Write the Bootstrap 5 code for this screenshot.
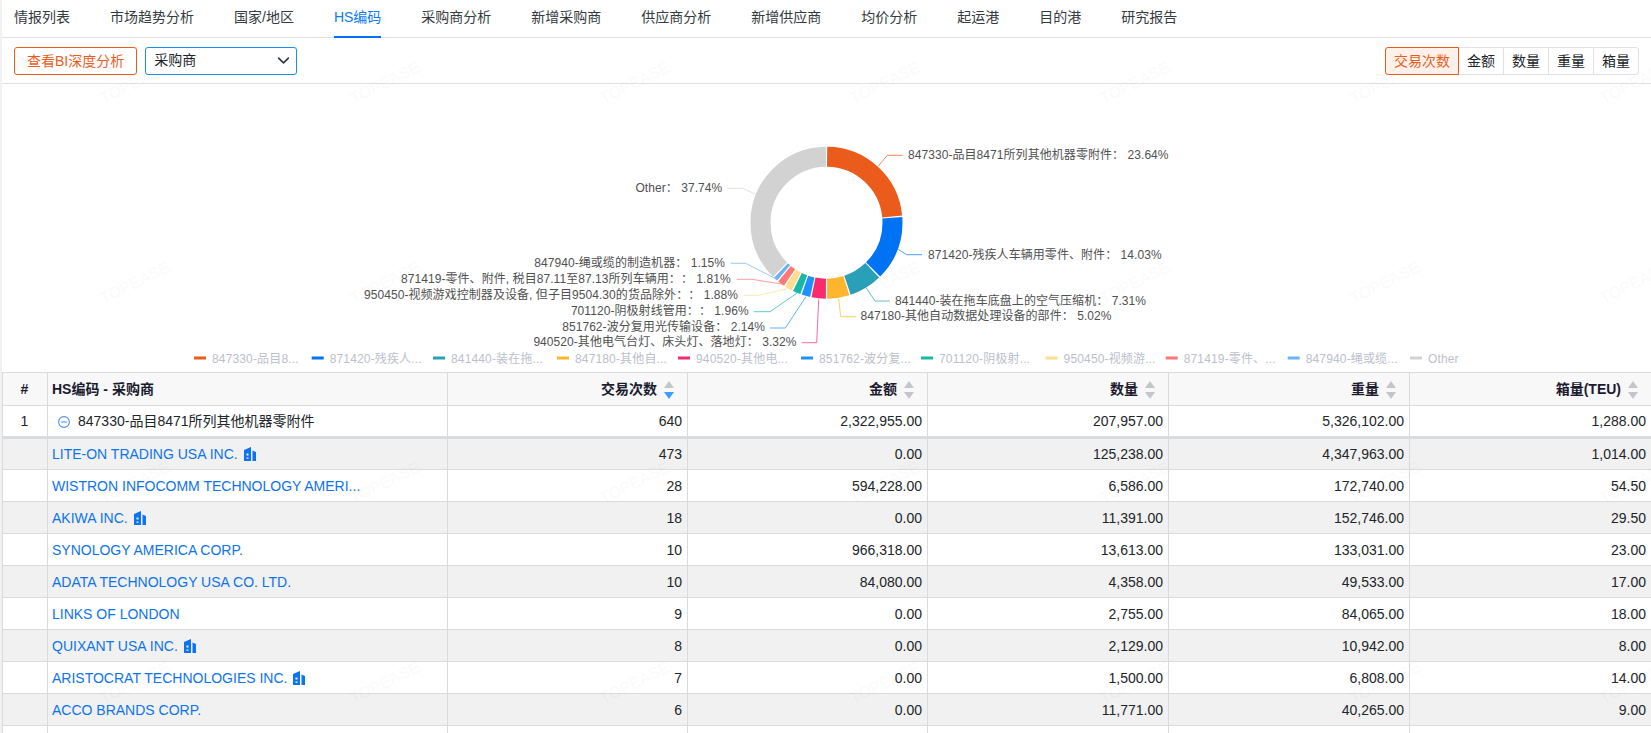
<!DOCTYPE html>
<html lang="zh-CN">
<head>
<meta charset="utf-8">
<title>HS编码</title>
<link href="https://cdn.jsdelivr.net/npm/bootstrap@5.3.0/dist/css/bootstrap.min.css" rel="stylesheet">
<style>
html,body{height:733px;overflow:hidden;background:#fff}
body{font-family:"Liberation Sans","Noto Sans CJK SC",sans-serif;font-size:14px;color:#212529;position:relative}
.shell{border-left:2px solid #f1f1f1;height:733px;overflow:hidden}
.tabbar{height:38px;border-bottom:1px solid #dee2e6}
.tabbar .nav-link{font-size:14px;line-height:20px;padding:7px 20px 0;height:38px;color:#343a40;margin-left:-8px;margin-right:8px;position:relative}
.tabbar .nav-link.on{color:#0d7bf5}
.tabbar .nav-link.on:after{content:"";position:absolute;left:20px;right:20px;bottom:0;height:2px;background:#0073f5}
.toolrow{height:46px;border-bottom:1px solid #dee2e6;padding:0 12px}
.bi-btn{font-size:14px;line-height:20px;padding:3px 12px;color:#eb5b1c;border:1px solid #eb5b1c;border-radius:3px;background:#fff}
.bi-btn:hover{color:#eb5b1c;border-color:#eb5b1c}
.buyer-select{width:152px;height:28px;font-size:14px;line-height:20px;padding:2px 28px 4px 8px;border:1px solid #1890e8;border-radius:3px;color:#212529;background-position:right 4px center;background-size:17px 13px}
.metric .btn{font-size:14px;line-height:20px;padding:3px 8px;border-color:#dee2e6;color:#212529;background:#fff;border-radius:3px}
.metric .btn.on{color:#eb5b1c;border-color:#eb5b1c;background:#fff1ea;z-index:2}
.chartbox{display:block;width:1649px;height:288px}
.chartbox text{font-family:"Liberation Sans","Noto Sans CJK SC",sans-serif;font-size:12px;fill:#505050;text-spacing-trim:space-all;letter-spacing:.06px}
.chartbox .lgd{fill:#bcc0cb;letter-spacing:.15px}
.chartbox .cn{font-family:"Noto Sans CJK TC",sans-serif}
.datatable{table-layout:fixed;width:1649px;margin:0;border-color:#d8dcdf;font-size:14px}
.datatable th,.datatable td{height:32px;padding:0 5px 0 4px;vertical-align:middle;line-height:20px;white-space:nowrap;border-color:#d8dcdf;color:#212529;box-shadow:none;background:transparent}
.datatable thead th{height:33px;background:#f8f8f8;font-weight:700;color:#1b1b2f}
.datatable tr.alt td{background:#f1f1f1}
.datatable tr.head-row td{border-bottom:3px solid #d8dcdf}
.datatable a{color:#0d73f0;text-decoration:none}
.sorter{display:inline-block;vertical-align:middle;margin:0 8px 0 7px}
.bld{vertical-align:-2px;margin-left:6px}
.fold{vertical-align:-2px;margin:0 8px 0 6px}
.wm{position:absolute;left:0;top:0;width:1651px;height:733px;pointer-events:none}
.wm text{font-family:"Liberation Sans",sans-serif;font-size:16px;fill:rgba(0,0,0,.018)}
</style>
</head>
<body>
<div class="shell">
  <ul class="nav tabbar flex-nowrap">
    <li class="nav-item"><a class="nav-link" href="#">情报列表</a></li>
    <li class="nav-item"><a class="nav-link" href="#">市场趋势分析</a></li>
    <li class="nav-item"><a class="nav-link" href="#">国家/地区</a></li>
    <li class="nav-item"><a class="nav-link on" href="#">HS编码</a></li>
    <li class="nav-item"><a class="nav-link" href="#">采购商分析</a></li>
    <li class="nav-item"><a class="nav-link" href="#">新增采购商</a></li>
    <li class="nav-item"><a class="nav-link" href="#">供应商分析</a></li>
    <li class="nav-item"><a class="nav-link" href="#">新增供应商</a></li>
    <li class="nav-item"><a class="nav-link" href="#">均价分析</a></li>
    <li class="nav-item"><a class="nav-link" href="#">起运港</a></li>
    <li class="nav-item"><a class="nav-link" href="#">目的港</a></li>
    <li class="nav-item"><a class="nav-link" href="#">研究报告</a></li>
  </ul>
  <div class="toolrow d-flex align-items-center justify-content-between">
    <div class="d-flex align-items-center gap-2">
      <button class="btn bi-btn" type="button">查看BI深度分析</button>
      <select class="form-select buyer-select"><option>采购商</option></select>
    </div>
    <div class="btn-group metric">
      <button class="btn on" type="button">交易次数</button>
      <button class="btn" type="button">金额</button>
      <button class="btn" type="button">数量</button>
      <button class="btn" type="button">重量</button>
      <button class="btn" type="button">箱量</button>
    </div>
  </div>

  <svg class="chartbox" viewBox="2 84 1649 288" xmlns="http://www.w3.org/2000/svg">
    <g fill="none" stroke-width="20" transform="rotate(-90 826.5 222.7)">
      <circle cx="826.5" cy="222.7" r="66" pathLength="100" stroke="#eb5b1c" stroke-dasharray="23.34 76.66" stroke-dashoffset="-0.15"/>
      <circle cx="826.5" cy="222.7" r="66" pathLength="100" stroke="#0073f5" stroke-dasharray="13.73 86.27" stroke-dashoffset="-23.79"/>
      <circle cx="826.5" cy="222.7" r="66" pathLength="100" stroke="#2a9fb8" stroke-dasharray="7.01 92.99" stroke-dashoffset="-37.82"/>
      <circle cx="826.5" cy="222.7" r="66" pathLength="100" stroke="#ffb52e" stroke-dasharray="4.72 95.28" stroke-dashoffset="-45.13"/>
      <circle cx="826.5" cy="222.7" r="66" pathLength="100" stroke="#f92b6e" stroke-dasharray="3.02 96.98" stroke-dashoffset="-50.15"/>
      <circle cx="826.5" cy="222.7" r="66" pathLength="100" stroke="#1e90ff" stroke-dasharray="1.84 98.16" stroke-dashoffset="-53.47"/>
      <circle cx="826.5" cy="222.7" r="66" pathLength="100" stroke="#17b8a6" stroke-dasharray="1.66 98.34" stroke-dashoffset="-55.61"/>
      <circle cx="826.5" cy="222.7" r="66" pathLength="100" stroke="#ffdd8f" stroke-dasharray="1.58 98.42" stroke-dashoffset="-57.57"/>
      <circle cx="826.5" cy="222.7" r="66" pathLength="100" stroke="#ff7777" stroke-dasharray="1.51 98.49" stroke-dashoffset="-59.45"/>
      <circle cx="826.5" cy="222.7" r="66" pathLength="100" stroke="#6db3f8" stroke-dasharray="0.85 99.15" stroke-dashoffset="-61.26"/>
      <circle cx="826.5" cy="222.7" r="66" pathLength="100" stroke="#d2d2d2" stroke-dasharray="37.44 62.56" stroke-dashoffset="-62.41"/>
    </g>
    <g fill="none" stroke-width="1">
      <polyline stroke="#f08a5c" points="878.3,166 887.3,155.3 902.7,155.3"/>
      <polyline stroke="#4d9df8" points="898.3,249.3 906.7,254.7 922,254.7"/>
      <polyline stroke="#6ebccd" points="866,287.7 875,301 890,301"/>
      <polyline stroke="#ffcb6d" points="838.7,299 840.7,316.7 856,316.7"/>
      <polyline stroke="#fb6b9a" points="818.7,299.3 816.7,342.7 802,342.7"/>
      <polyline stroke="#62b1ff" points="806,296.7 785.3,328 770,328"/>
      <polyline stroke="#5dcdc1" points="796.7,293.3 770,311.7 754,311.7"/>
      <polyline stroke="#ffe7b1" points="788.3,288.7 758.7,295.3 743.3,295.3"/>
      <polyline stroke="#ff9f9f" points="781.7,284 751.7,279.3 736.7,279.3"/>
      <polyline stroke="#99caf9" points="775,278.3 745.7,263.3 730.7,263.3"/>
      <polyline stroke="#e0e0e0" points="755.3,194 742.3,188.3 727.3,188.3"/>
    </g>
    <text x="908" y="158.5">847330-品目8471所列其他机器零附件<tspan class="cn">：</tspan> 23.64%</text>
    <text x="928" y="258.5">871420-残疾人车辆用零件、附件<tspan class="cn">：</tspan> 14.03%</text>
    <text x="895" y="304.5">841440-装在拖车底盘上的空气压缩机<tspan class="cn">：</tspan> 7.31%</text>
    <text x="860.5" y="320">847180-其他自动数据处理设备的部件<tspan class="cn">：</tspan> 5.02%</text>
    <text x="796.5" y="346" text-anchor="end">940520-其他电气台灯、床头灯、落地灯<tspan class="cn">：</tspan> 3.32%</text>
    <text x="765" y="331" text-anchor="end">851762-波分复用光传输设备<tspan class="cn">：</tspan> 2.14%</text>
    <text x="748.7" y="315" text-anchor="end">701120-阴极射线管用<tspan class="cn">：：</tspan> 1.96%</text>
    <text x="738" y="298.5" text-anchor="end">950450-视频游戏控制器及设备, 但子目9504.30的货品除外<tspan class="cn">：：</tspan> 1.88%</text>
    <text x="730.7" y="283" text-anchor="end">871419-零件、附件, 税目87.11至87.13所列车辆用<tspan class="cn">：：</tspan> 1.81%</text>
    <text x="725" y="267" text-anchor="end">847940-绳或缆的制造机器<tspan class="cn">：</tspan> 1.15%</text>
    <text x="722.3" y="192" text-anchor="end">Other<tspan class="cn">：</tspan> 37.74%</text>
    <g stroke-width="3">
      <line x1="194" x2="206" y1="358" y2="358" stroke="#eb5b1c"/>
      <line x1="311.7" x2="323.7" y1="358" y2="358" stroke="#0073f5"/>
      <line x1="433" x2="445" y1="358" y2="358" stroke="#2a9fb8"/>
      <line x1="557" x2="569" y1="358" y2="358" stroke="#ffb52e"/>
      <line x1="678" x2="690" y1="358" y2="358" stroke="#f92b6e"/>
      <line x1="801" x2="813" y1="358" y2="358" stroke="#1e90ff"/>
      <line x1="921" x2="933" y1="358" y2="358" stroke="#17b8a6"/>
      <line x1="1045.6" x2="1057.6" y1="358" y2="358" stroke="#ffdd8f"/>
      <line x1="1165.7" x2="1177.7" y1="358" y2="358" stroke="#ff7777"/>
      <line x1="1287.7" x2="1299.7" y1="358" y2="358" stroke="#6db3f8"/>
      <line x1="1410" x2="1422" y1="358" y2="358" stroke="#d2d2d2"/>
    </g>
    <text class="lgd" x="212" y="362.5">847330-品目8...</text>
    <text class="lgd" x="329.7" y="362.5">871420-残疾人...</text>
    <text class="lgd" x="451" y="362.5">841440-装在拖...</text>
    <text class="lgd" x="575" y="362.5">847180-其他自...</text>
    <text class="lgd" x="696" y="362.5">940520-其他电...</text>
    <text class="lgd" x="819" y="362.5">851762-波分复...</text>
    <text class="lgd" x="939" y="362.5">701120-阴极射...</text>
    <text class="lgd" x="1063.6" y="362.5">950450-视频游...</text>
    <text class="lgd" x="1183.7" y="362.5">871419-零件、...</text>
    <text class="lgd" x="1305.7" y="362.5">847940-绳或缆...</text>
    <text class="lgd" x="1428" y="362.5">Other</text>
  </svg>

  <table class="table table-bordered datatable">
    <colgroup>
      <col style="width:45px"><col style="width:400px"><col style="width:240px"><col style="width:240px"><col style="width:241px"><col style="width:241px"><col style="width:242px">
    </colgroup>
    <thead>
      <tr>
        <th class="text-center">#</th>
        <th>HS编码 - 采购商</th>
        <th class="text-end">交易次数<svg class="sorter" width="10" height="18" viewBox="0 0 10 18"><path d="M5 0l5 7H0z" fill="#c3c7cc"/><path d="M5 18l5-7H0z" fill="#3f9dfb"/></svg></th>
        <th class="text-end">金额<svg class="sorter" width="10" height="18" viewBox="0 0 10 18"><path d="M5 0l5 7H0z" fill="#c3c7cc"/><path d="M5 18l5-7H0z" fill="#c3c7cc"/></svg></th>
        <th class="text-end">数量<svg class="sorter" width="10" height="18" viewBox="0 0 10 18"><path d="M5 0l5 7H0z" fill="#c3c7cc"/><path d="M5 18l5-7H0z" fill="#c3c7cc"/></svg></th>
        <th class="text-end">重量<svg class="sorter" width="10" height="18" viewBox="0 0 10 18"><path d="M5 0l5 7H0z" fill="#c3c7cc"/><path d="M5 18l5-7H0z" fill="#c3c7cc"/></svg></th>
        <th class="text-end">箱量(TEU)<svg class="sorter" width="10" height="18" viewBox="0 0 10 18"><path d="M5 0l5 7H0z" fill="#c3c7cc"/><path d="M5 18l5-7H0z" fill="#c3c7cc"/></svg></th>
      </tr>
    </thead>
    <tbody>
      <tr class="head-row"><td class="text-center">1</td><td><svg class="fold" width="12" height="12" viewBox="0 0 12 12"><circle cx="6" cy="6" r="5.4" fill="none" stroke="#4c93f0" stroke-width="1.1"/><path d="M3.2 6h5.6" stroke="#4c93f0" stroke-width="1.1"/></svg>847330-品目8471所列其他机器零附件</td><td class="text-end">640</td><td class="text-end">2,322,955.00</td><td class="text-end">207,957.00</td><td class="text-end">5,326,102.00</td><td class="text-end">1,288.00</td></tr>
      <tr class="alt"><td></td><td><a href="#">LITE-ON TRADING USA INC.</a><svg class="bld" width="12" height="14" viewBox="0 0 12 14"><path fill="#0d73f0" fill-rule="evenodd" d="M0 3 7 0v14H0zM8.5 3.5 12 5v9H8.5zM2.5 6.5v2h2v-2zm0 4v1.2h2v-1.2z"/></svg></td><td class="text-end">473</td><td class="text-end">0.00</td><td class="text-end">125,238.00</td><td class="text-end">4,347,963.00</td><td class="text-end">1,014.00</td></tr>
      <tr><td></td><td><a href="#">WISTRON INFOCOMM TECHNOLOGY AMERI...</a></td><td class="text-end">28</td><td class="text-end">594,228.00</td><td class="text-end">6,586.00</td><td class="text-end">172,740.00</td><td class="text-end">54.50</td></tr>
      <tr class="alt"><td></td><td><a href="#">AKIWA INC.</a><svg class="bld" width="12" height="14" viewBox="0 0 12 14"><path fill="#0d73f0" fill-rule="evenodd" d="M0 3 7 0v14H0zM8.5 3.5 12 5v9H8.5zM2.5 6.5v2h2v-2zm0 4v1.2h2v-1.2z"/></svg></td><td class="text-end">18</td><td class="text-end">0.00</td><td class="text-end">11,391.00</td><td class="text-end">152,746.00</td><td class="text-end">29.50</td></tr>
      <tr><td></td><td><a href="#">SYNOLOGY AMERICA CORP.</a></td><td class="text-end">10</td><td class="text-end">966,318.00</td><td class="text-end">13,613.00</td><td class="text-end">133,031.00</td><td class="text-end">23.00</td></tr>
      <tr class="alt"><td></td><td><a href="#">ADATA TECHNOLOGY USA CO. LTD.</a></td><td class="text-end">10</td><td class="text-end">84,080.00</td><td class="text-end">4,358.00</td><td class="text-end">49,533.00</td><td class="text-end">17.00</td></tr>
      <tr><td></td><td><a href="#">LINKS OF LONDON</a></td><td class="text-end">9</td><td class="text-end">0.00</td><td class="text-end">2,755.00</td><td class="text-end">84,065.00</td><td class="text-end">18.00</td></tr>
      <tr class="alt"><td></td><td><a href="#">QUIXANT USA INC.</a><svg class="bld" width="12" height="14" viewBox="0 0 12 14"><path fill="#0d73f0" fill-rule="evenodd" d="M0 3 7 0v14H0zM8.5 3.5 12 5v9H8.5zM2.5 6.5v2h2v-2zm0 4v1.2h2v-1.2z"/></svg></td><td class="text-end">8</td><td class="text-end">0.00</td><td class="text-end">2,129.00</td><td class="text-end">10,942.00</td><td class="text-end">8.00</td></tr>
      <tr><td></td><td><a href="#">ARISTOCRAT TECHNOLOGIES INC.</a><svg class="bld" width="12" height="14" viewBox="0 0 12 14"><path fill="#0d73f0" fill-rule="evenodd" d="M0 3 7 0v14H0zM8.5 3.5 12 5v9H8.5zM2.5 6.5v2h2v-2zm0 4v1.2h2v-1.2z"/></svg></td><td class="text-end">7</td><td class="text-end">0.00</td><td class="text-end">1,500.00</td><td class="text-end">6,808.00</td><td class="text-end">14.00</td></tr>
      <tr class="alt"><td></td><td><a href="#">ACCO BRANDS CORP.</a></td><td class="text-end">6</td><td class="text-end">0.00</td><td class="text-end">11,771.00</td><td class="text-end">40,265.00</td><td class="text-end">9.00</td></tr>
      <tr><td></td><td></td><td></td><td></td><td></td><td></td><td></td></tr>
    </tbody>
  </table>
</div>
<svg class="wm" xmlns="http://www.w3.org/2000/svg">
  <defs><pattern id="wmark" width="250" height="200" patternUnits="userSpaceOnUse"><text x="135" y="88" text-anchor="middle" transform="rotate(-26 135 83)">TOPEASE</text></pattern></defs>
  <rect width="1651" height="733" fill="url(#wmark)"/>
</svg>
<script src="https://cdn.jsdelivr.net/npm/bootstrap@5.3.0/dist/js/bootstrap.bundle.min.js"></script>
</body>
</html>
